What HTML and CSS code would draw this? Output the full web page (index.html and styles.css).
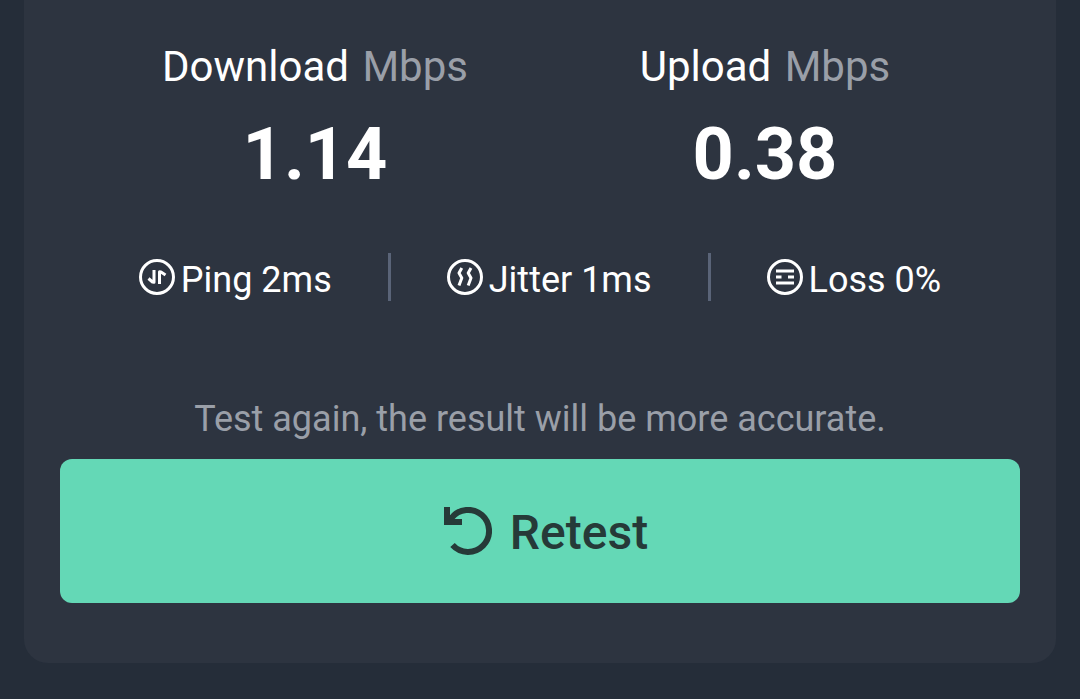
FILE: index.html
```html
<!DOCTYPE html>
<html lang="en">
<head>
  <meta charset="UTF-8" />
  <meta name="viewport" content="width=device-width, initial-scale=1.0" />
  <title>Speed Test</title>
  <link rel="stylesheet" href="styles.css">
</head>
<body>
  <main class="card">
    <!-- speeds -->
    <div class="speeds">
      <div class="speed">
        <div class="speed-label">Download <span class="unit">Mbps</span></div>
        <div class="speed-value">1.14</div>
      </div>
      <div class="speed">
        <div class="speed-label">Upload <span class="unit">Mbps</span></div>
        <div class="speed-value">0.38</div>
      </div>
    </div>

    <!-- ping, jitter, loss -->
    <div class="stats">
      <div class="stat">
        <svg class="stat-icon" viewBox="0 0 36 36" aria-hidden="true">
          <circle cx="18" cy="18" r="16.5" />
          <path d="M15 11V23.2L13.5 23L9.5 19.5M20.5 25V12.8L22 13L26.5 16" />
        </svg>
        <span class="stat-text">Ping 2ms</span>
      </div>
      <div class="stat">
        <svg class="stat-icon" viewBox="0 0 36 36" aria-hidden="true">
          <circle cx="18" cy="18" r="16.5" />
          <path d="M14.8 9L12 14L14.8 19L12 26.5M24 9L21.2 14L24 19L21.2 26.5" />
        </svg>
        <span class="stat-text">Jitter 1ms</span>
      </div>
      <div class="stat">
        <svg class="stat-icon" viewBox="0 0 36 36" aria-hidden="true">
          <circle cx="18" cy="18" r="16.5" />
          <path d="M9 12H27M9 18H14.5M21 18H27M9 24H27" />
        </svg>
        <span class="stat-text">Loss 0%</span>
      </div>
    </div>

    <p class="hint">Test again, the result will be more accurate.</p>
    <button type="button" class="retest">
      <svg class="retest-icon" viewBox="0 0 48 48" aria-hidden="true">
        <path class="arc" d="M7.5 11A21 21 0 1 1 8.5 38" />
        <path class="head" d="M0 0H6V8L10 12H18V18H0Z" />
      </svg>
      <span>Retest</span>
    </button>
  </main>
</body>
</html>
```
FILE: styles.css
```css
* {
  box-sizing: border-box;
}

body {
  margin: 0;
  padding: 0 24px 36px;
  background-color: #252d39;
  font-family: Roboto, "Liberation Sans", sans-serif;
  color: #fff;
}

.card {
  padding: 42px 36px 60px;
  background-color: #2d3440;
  border-radius: 0 0 24px 24px;
}

.speeds {
  display: grid;
  grid-template-columns: 1fr 1fr;
  padding: 0 30px;
  text-align: center;
}

.speed-label {
  font-size: 42px;
  line-height: 50px;
}

.unit {
  margin-left: 3px;
  color: #9a9fa8;
}

.speed-value {
  margin-top: 21px;
  font-size: 72px;
  font-weight: bold;
  line-height: 84px;
}

.stats {
  display: flex;
  justify-content: center;
  margin-top: 56px;
}

.stat {
  display: flex;
  align-items: center;
  gap: 6px;
  height: 48px;
  padding: 0 56px;
  font-size: 36px;
  line-height: 44px;
}

.stat + .stat {
  border-left: 3px solid #5a6478;
}

.stat-text {
  padding-top: 5px;
}

.stat-icon {
  width: 36px;
  height: 36px;
  fill: none;
  stroke: #fff;
  stroke-width: 3;
}

.stat-icon path {
  stroke-linejoin: round;
}

.hint {
  margin: 96px 0 18px;
  font-size: 36px;
  line-height: 44px;
  text-align: center;
  color: #9a9fa8;
}

.retest {
  display: flex;
  justify-content: center;
  align-items: center;
  gap: 18px;
  width: 100%;
  height: 144px;
  padding: 0 0 0 12px;
  border: none;
  border-radius: 12px;
  background-color: #64d8b6;
  color: #263a38;
  font-family: inherit;
  font-size: 48px;
  font-weight: 500;
  cursor: pointer;
}

.retest:hover {
  background-color: #58c9a8;
}

.retest span {
  padding-top: 3px;
}

.retest-icon {
  width: 48px;
  height: 48px;
}

.retest-icon .arc {
  fill: none;
  stroke: currentColor;
  stroke-width: 6;
}

.retest-icon .head {
  fill: currentColor;
}
```
